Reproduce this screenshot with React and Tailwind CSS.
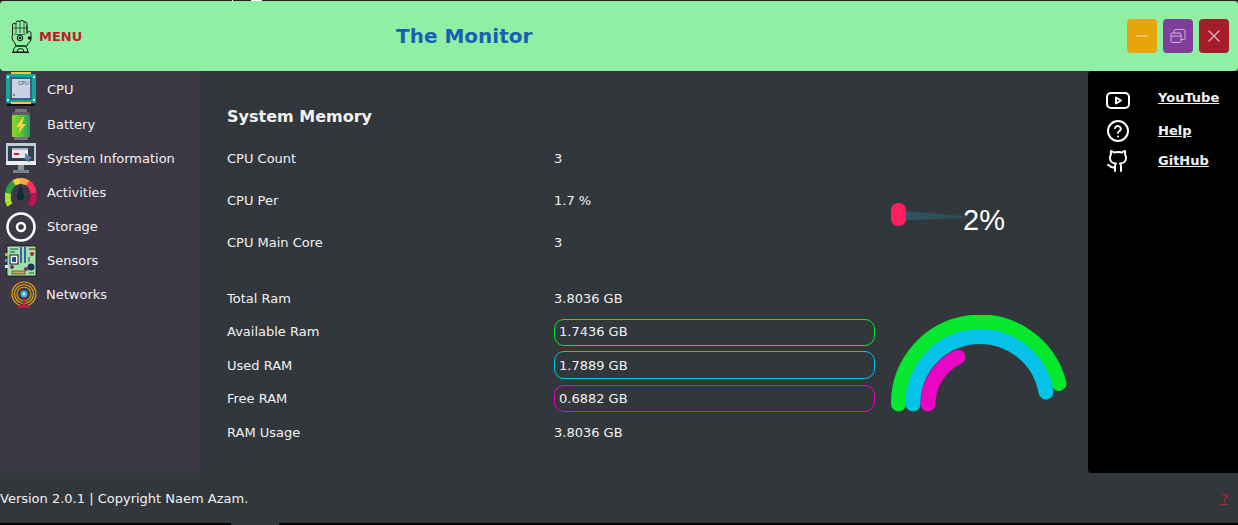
import React from "react";

const Gauntlet = () => (
  <svg width="21" height="33" viewBox="0 0 21 33" fill="none" stroke="#111" strokeWidth="1" strokeLinejoin="round" className="block">
    <path d="M1.500 15V5q0-1.500 1.500-1.500T5 4.500V2.500q0-1.500 2-1.500t2 1V1.500q0-1 2-1t2 1.500q3-.5 3 1.500v9.500q1-1.500 2.500-1.500t1.500 2V19q0 3-3 4.500l-1 2.500H5l-1.500-3.500Q1 20 1 17.500z" />
    <path d="M5 4.500V13M9 2V13M13 2V13M16 5V14M1.500 8H16M3 14q6 1.500 12 0" strokeWidth=".7" />
    <circle cx="9" cy="18" r="2.800" />
    <circle cx="9" cy="18" r="1" fill="#111" />
    <circle cx="18.500" cy="18" r="1.300" fill="#111" />
    <path d="M2 32q.5-5 3.500-6h8q3 1 3.500 6zM6 32q0-3.500 3.500-3.500T13 32M1 32.500h17" />
  </svg>
);

const CpuIcon = () => (
  <svg width="32" height="35" viewBox="0 0 32 35" className="block">
    <rect x="0" y="2" width="30" height="29" fill="#10a79c" />
    <rect x="5" y="0" width="20" height="2" fill="#f6c453" />
    <rect x="5" y="30" width="20" height="2" fill="#f6c453" />
    <rect x="1" y="32" width="28" height="2" fill="#111" />
    <rect x="4" y="5" width="22" height="23" fill="#4a5a78" />
    <rect x="6" y="7" width="18" height="19" fill="#c9d3df" />
    <text x="12" y="13" fontSize="5" fill="#3d4a60" fontFamily="Liberation Sans, sans-serif">CPU</text>
    <rect x="7" y="22" width="2" height="2" fill="#6f7f96" />
    <path d="M1 4h2v2H1zM27 4h2v2h-2zM1 27h2v2H1zM27 27h2v2h-2z" fill="#bff3ea" />
  </svg>
);

const BatteryIcon = () => (
  <svg width="20" height="32" viewBox="0 0 20 32" className="block">
    <defs>
      <linearGradient id="bat" x1="0" x2="1" y1="0" y2="0">
        <stop offset="0" stopColor="#8fd62e" />
        <stop offset=".55" stopColor="#57c23a" />
        <stop offset="1" stopColor="#1f9b5e" />
      </linearGradient>
    </defs>
    <rect x="4" y="0" width="12" height="4" rx="1" fill="#77767b" />
    <rect x="1" y="3" width="18" height="25" rx="2" fill="#5e5c64" />
    <rect x="1" y="6" width="18" height="22" rx="1" fill="url(#bat)" />
    <rect x="3" y="28" width="14" height="3" rx="1" fill="#77767b" />
    <path d="M12 8L5 18h4l-2 7 8-10h-4l2-7z" fill="#f8d34a" />
  </svg>
);

const MonitorIcon = () => (
  <svg width="32" height="32" viewBox="0 0 32 32" className="block">
    <rect x="0" y="0" width="30" height="22" fill="#c0cad4" />
    <rect x="2" y="3" width="26" height="15" fill="#2e3f53" />
    <rect x="0" y="18" width="30" height="4" fill="#e8edf2" />
    <rect x="6" y="5" width="16" height="10" fill="#e8e8ee" />
    <rect x="6" y="5" width="16" height="2" fill="#aeb6c6" />
    <rect x="8" y="10" width="5" height="2" fill="#e01b24" />
    <path d="M19 10l7 5-3 1 1 3-2 0-1-3-2 1z" fill="#6a7fb5" />
    <rect x="12" y="22" width="6" height="5" fill="#8a949e" />
    <rect x="7" y="27" width="16" height="3" fill="#77828c" />
  </svg>
);

const GaugeIcon = () => (
  <svg width="32" height="30" viewBox="0 0 32 30" fill="none" className="block">
    <path d="M5 27A13.500 13.500 0 0 1 3.500 15" stroke="#a6e22e" strokeWidth="6" />
    <path d="M3.500 15A13.500 13.500 0 0 1 9 5" stroke="#2e9e3f" strokeWidth="6" />
    <path d="M9 5A13.500 13.500 0 0 1 15 3" stroke="#f6d32d" strokeWidth="6" />
    <path d="M15 3A13.500 13.500 0 0 1 23 5" stroke="#f5a742" strokeWidth="6" />
    <path d="M23 5A13.500 13.500 0 0 1 28.500 15" stroke="#ff2d60" strokeWidth="6" />
    <path d="M28.500 15A13.500 13.500 0 0 1 25 27" stroke="#c8104f" strokeWidth="6" />
    <path d="M15.500 5l-3.500 14a3.500 3.500 0 0 0 7 0z" fill="#0e2a3c" />
  </svg>
);

const DiscIcon = () => (
  <svg width="32" height="32" viewBox="0 0 32 32" fill="none" stroke="#fff" className="block">
    <circle cx="16" cy="16" r="13.500" strokeWidth="2.500" />
    <circle cx="16" cy="16" r="4" strokeWidth="2.500" />
  </svg>
);

const BoardIcon = () => (
  <svg width="32" height="32" viewBox="0 0 32 32" className="block">
    <rect x="2" y="1" width="29" height="30" fill="#a3dfae" stroke="#111" strokeWidth=".8" />
    <rect x="15" y="2" width="2" height="16" fill="#3465a4" />
    <rect x="19" y="2" width="2" height="16" fill="#3465a4" />
    <rect x="24" y="3" width="6" height="2" fill="#8a7a3f" />
    <circle cx="27" cy="9" r="2" fill="#c01c48" />
    <rect x="5" y="10" width="8" height="9" fill="#fff" stroke="#111" />
    <rect x="7" y="12" width="4" height="5" fill="#1c4f8f" />
    <circle cx="21" cy="24" r="2" fill="#77324a" />
    <circle cx="7" cy="22" r="2" fill="#77324a" />
    <circle cx="26" cy="22" r="3.500" fill="#16355c" />
    <rect x="7" y="26" width="13" height="3" fill="#c8a850" stroke="#111" strokeWidth=".5" />
    <rect x="0" y="8" width="3" height="3" fill="#c8a850" />
    <rect x="0" y="14" width="3" height="3" fill="#4a90d9" />
    <rect x="0" y="20" width="3" height="3" fill="#e8e8e8" />
    <path d="M5 4h8M5 7h5M24 12v5M24 28h5" stroke="#1f4f3a" strokeWidth="1" />
  </svg>
);

const NetIcon = () => (
  <svg width="28" height="28" viewBox="0 0 28 28" fill="none" className="block">
    <circle cx="14" cy="13" r="12" stroke="#e5a50a" strokeWidth="1.200" />
    <circle cx="14" cy="13" r="9.500" stroke="#e5a50a" strokeWidth="1.200" />
    <circle cx="14" cy="13" r="7" stroke="#e5a50a" strokeWidth="1.200" />
    <circle cx="14" cy="13" r="4.500" fill="#3d3846" />
    <circle cx="14" cy="13" r="3.500" fill="#33b5d8" />
    <circle cx="14" cy="13" r="1.300" fill="#e8f8fc" />
    <rect x="13" y="16" width="2" height="8" fill="#c01c48" />
    <rect x="8" y="24" width="12" height="3" rx="1" fill="#c01c48" />
  </svg>
);

const nav = [
  { label: "CPU", icon: <CpuIcon />, h: "h-[35px]", px: "pl-[6px]", gap: "w-[41px]" },
  { label: "Battery", icon: <BatteryIcon />, h: "h-[35px]", px: "pl-[11px]", gap: "w-[36px]" },
  { label: "System Information", icon: <MonitorIcon />, h: "h-[34px]", px: "pl-[6px]", gap: "w-[41px]" },
  { label: "Activities", icon: <GaugeIcon />, h: "h-[34px]", px: "pl-[5px]", gap: "w-[42px]" },
  { label: "Storage", icon: <DiscIcon />, h: "h-[34px]", px: "pl-[5px]", gap: "w-[42px]" },
  { label: "Sensors", icon: <BoardIcon />, h: "h-[34px]", px: "pl-[5px]", gap: "w-[42px]" },
  { label: "Networks", icon: <NetIcon />, h: "h-[34px]", px: "pl-[10px]", gap: "w-[36px]" },
];

function Row({ label, value, h, ring }) {
  return (
    <div className={`flex items-center ${h}`}>
      <span className="w-[327px] shrink-0">{label}</span>
      {ring ? (
        <span className={`flex-1 flex items-center pl-[4px] rounded-[10px] border ${ring}`}>{value}</span>
      ) : (
        <span>{value}</span>
      )}
    </div>
  );
}

export default function App() {
  return (
    <div className="w-[1238px] h-[525px] overflow-hidden bg-[#32373b] text-[13px] text-[#f2f2f2] font-['DejaVu_Sans',sans-serif] flex flex-col">
      <div className="h-[1px] shrink-0 bg-[#222] flex pl-[232px] gap-[12px]">
        <span className="w-[1px] bg-white" />
        <span className="w-[11px] ml-[6px] bg-white" />
      </div>
      <header className="h-[70px] shrink-0 bg-[#8ff0a4] rounded-[4px] flex items-center">
        <div className="pl-[11px] w-[39px] shrink-0"><Gauntlet /></div>
        <span className="w-[357px] shrink-0 font-bold text-[#c01c28] mt-[1px]">MENU</span>
        <h1 className="flex-1 font-bold text-[20px] text-[#1a5fb4]">The Monitor</h1>
        <div className="flex gap-[6px] pr-[9px] -mt-[1px]">
          <button className="w-[30px] h-[34px] rounded-[4px] bg-[#e5a50a] flex items-center justify-center">
            <svg width="16" height="16" viewBox="0 0 16 16" stroke="#fff" strokeOpacity=".6" fill="none"><path d="M2.500 8h11" strokeWidth="1.200" /></svg>
          </button>
          <button className="w-[30px] h-[34px] rounded-[4px] bg-[#813d9c] flex items-center justify-center">
            <svg width="16" height="16" viewBox="0 0 16 16" stroke="#fff" strokeOpacity=".6" fill="none" strokeWidth="1"><rect x="1" y="5" width="10" height="9.500" rx="1.500" /><path d="M1 8h10M4 5V3q0-1.500 1.500-1.500H14q1 0 1 1.500v7q0 1.500-1.500 1.500H11" /></svg>
          </button>
          <button className="w-[30px] h-[34px] rounded-[4px] bg-[#a51d2d] flex items-center justify-center">
            <svg width="16" height="16" viewBox="0 0 16 16" stroke="#fff" strokeOpacity=".7" fill="none" strokeWidth="1.100"><path d="M2.500 2.500l11 11M13.500 2.500l-11 11" /></svg>
          </button>
        </div>
      </header>

      <div className="h-[402px] shrink-0 flex">
        <nav className="w-[200px] shrink-0 bg-[#3d3846] rounded-b-[4px] pt-[1px]">
          {nav.map((n) => (
            <div key={n.label} className={`flex items-center ${n.h} ${n.px}`}>
              <div className={`${n.gap} shrink-0`}>{n.icon}</div>
              <span>{n.label}</span>
            </div>
          ))}
        </nav>

        <main className="flex-1 flex pl-[27px]">
          <div className="w-[648px] shrink-0 pt-[34px]">
            <h2 className="font-bold text-[16px] h-[24px] leading-[24px] mb-[9px]">System Memory</h2>
            <Row label="CPU Count" value="3" h="h-[42px]" />
            <Row label="CPU Per" value="1.7 %" h="h-[42px]" />
            <Row label="CPU Main Core" value="3" h="h-[42px]" />
            <div className="h-[18px]" />
            <Row label="Total Ram" value="3.8036 GB" h="h-[33px]" />
            <Row label="Available Ram" value="1.7436 GB" h="h-[34px]" ring="h-[27px] border-[#05e82e]" />
            <Row label="Used RAM" value="1.7889 GB" h="h-[33px]" ring="h-[28px] mb-[1px] pt-[1px] border-[#05c3e8]" />
            <Row label="Free RAM" value="0.6882 GB" h="h-[34px]" ring="h-[27px] mb-[1px] pt-[1px] border-[#e805c3]" />
            <Row label="RAM Usage" value="3.8036 GB" h="h-[34px]" />
          </div>
          <div className="flex-1 pl-[16px] pt-[132px]">
            <div className="relative w-[176px] h-[30px]">
              <svg width="176" height="30" viewBox="0 0 176 30" className="block">
                <defs>
                  <linearGradient id="ng" x1="0" x2="1" y1="0" y2="0">
                    <stop offset="0" stopColor="#2f5663" />
                    <stop offset=".85" stopColor="#2c4a55" />
                    <stop offset="1" stopColor="#32373b" />
                  </linearGradient>
                </defs>
                <path d="M14 8L82 14V15L14 17z" fill="url(#ng)" />
                <rect x="0" y="0" width="15" height="23" rx="7" fill="#ff1f5f" />
              </svg>
              <span className="absolute left-[72px] top-[0px] text-[29px] leading-[34px] text-white font-['Liberation_Sans',sans-serif]">2%</span>
            </div>
            <svg width="178" height="100" viewBox="0 0 178 100" fill="none" strokeWidth="15" strokeLinecap="round" className="block mt-[82px]">
              <path d="M7.500 89A81.500 81.500 0 0 1 168 68.500" stroke="#05e82e" />
              <path d="M22 89A67 67 0 0 1 155 77" stroke="#05c3e8" />
              <path d="M37 89A52 52 0 0 1 67 42" stroke="#e805c3" />
            </svg>
          </div>
        </main>

        <aside className="w-[150px] shrink-0 bg-black rounded-l-[4px] font-bold pt-[16px]">
          <a className="flex items-center h-[26px]">
            <svg width="24" height="24" viewBox="0 0 24 24" fill="none" stroke="#fff" strokeWidth="2" strokeLinejoin="round" className="ml-[18px]">
              <rect x="1" y="5" width="22" height="15" rx="4" /><path d="M10 9.500v6l5-3z" />
            </svg>
            <span className="ml-[28px] underline -mt-[4px]">YouTube</span>
          </a>
          <a className="flex items-center h-[30px] mt-[3px]">
            <svg width="24" height="24" viewBox="0 0 24 24" fill="none" stroke="#fff" strokeWidth="2" strokeLinecap="round" className="ml-[18px]">
              <circle cx="12" cy="12" r="10" /><path d="M9 9a3 3 0 0 1 5.800 1c0 2-2.800 2.500-2.800 4" /><path d="M12 17.500h.01" />
            </svg>
            <span className="ml-[28px] underline">Help</span>
          </a>
          <a className="flex items-center h-[30px]">
            <svg width="24" height="24" viewBox="0 0 24 24" fill="none" stroke="#fff" strokeWidth="2" strokeLinecap="round" strokeLinejoin="round" className="ml-[18px]">
              <path d="M15 22v-4a4.800 4.800 0 0 0-1-3.500c3 0 6-2 6-5.500.08-1.250-.27-2.480-1-3.500.28-1.150.28-2.350 0-3.500 0 0-1 0-3 1.500-2.640-.5-5.360-.5-8 0C6 2 5 2 5 2c-.3 1.150-.3 2.350 0 3.500A5.400 5.400 0 0 0 4 9c0 3.500 3 5.500 6 5.500-.39.490-.68 1.050-.85 1.650-.17.600-.22 1.230-.15 1.850v4" /><path d="M9 18c-4.510 2-5-2-7-2" />
            </svg>
            <span className="ml-[28px] underline">GitHub</span>
          </a>
        </aside>
      </div>

      <footer className="flex-1 flex items-center justify-between pr-[10px] pt-[2px]">
        <span>Version 2.0.1 | Copyright Naem Azam.</span>
        <a className="underline text-[#c01c28]">?</a>
      </footer>
      <div className="h-[2px] shrink-0 bg-black flex pl-[231px]">
        <span className="w-[48px] bg-[#32373b]" />
      </div>
    </div>
  );
}
